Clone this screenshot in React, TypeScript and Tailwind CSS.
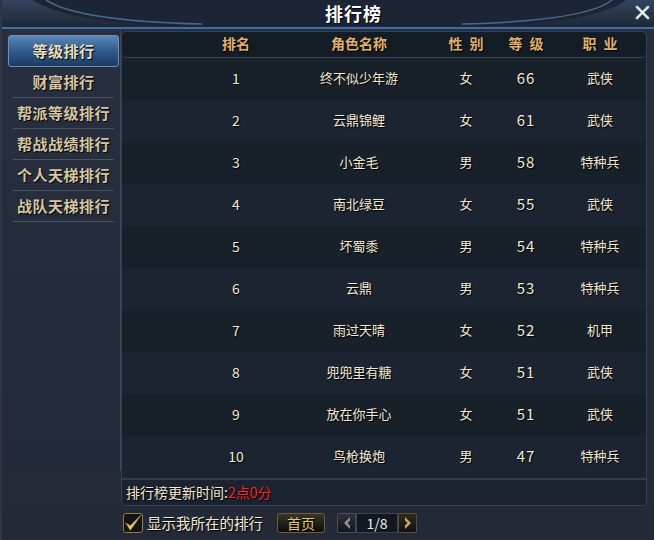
import React from "react";

const FONT = { fontFamily: '"Noto Sans CJK SC", "Noto Sans", sans-serif' };

const menu = ["等级排行", "财富排行", "帮派等级排行", "帮战战绩排行", "个人天梯排行", "战队天梯排行"];

const rows = [
  ["1", "终不似少年游", "女", "66", "武侠"],
  ["2", "云鼎锦鲤", "女", "61", "武侠"],
  ["3", "小金毛", "男", "58", "特种兵"],
  ["4", "南北绿豆", "女", "55", "武侠"],
  ["5", "坏蜀黍", "男", "54", "特种兵"],
  ["6", "云鼎", "男", "53", "特种兵"],
  ["7", "雨过天晴", "女", "52", "机甲"],
  ["8", "兜兜里有糖", "女", "51", "武侠"],
  ["9", "放在你手心", "女", "51", "武侠"],
  ["10", "鸟枪换炮", "男", "47", "特种兵"],
];

const cols = "grid grid-cols-[100px_146px_68px_52px_96px] pl-[64px]";

function TitleBar() {
  return (
    <div className="relative h-[29px] bg-gradient-to-b from-[#33445e] to-[#1e2737] border-b-2 border-[#3d6ea8]">
      {/* 标题栏弧线装饰 */}
      <svg className="absolute inset-0" width="654" height="29" viewBox="0 0 654 29">
        <path d="M30 0 Q70 25 200 27 L460 27 Q590 25 624 0 Z" fill="#1c2535" />
        <path d="M44 0 Q76 21 200 24" stroke="#5877a0" strokeWidth="1.5" fill="none" opacity="0.8" />
        <path d="M610 0 Q584 21 460 24" stroke="#5877a0" strokeWidth="1.5" fill="none" opacity="0.8" />
      </svg>
      <div className="absolute left-[323px] top-[4px] leading-none text-[18px] font-bold text-white tracking-[1px] [text-shadow:1px_1px_1px_#000]">
        排行榜
      </div>
      <svg className="absolute right-[4px] top-[5px]" width="15" height="15" viewBox="0 0 15 15">
        <path d="M2 2 L13 13 M13 2 L2 13" stroke="#9fb2c8" strokeWidth="3" strokeLinecap="round" />
        <path d="M2 2 L13 13 M13 2 L2 13" stroke="#ffffff" strokeWidth="1.3" strokeLinecap="round" />
      </svg>
    </div>
  );
}

function Sidebar() {
  return (
    <div className="w-[114px] h-[441px] bg-gradient-to-b from-[#283040] to-[#222a39] border-r border-[#3a4559] pt-[6px] px-[1px]">
      {menu.map((m, i) =>
        i === 0 ? (
          <div
            key={m}
            className="h-[32px] rounded-[3px] border border-[#6f8fb4] bg-gradient-to-b from-[#5b86b8] via-[#2f5b8d] to-[#1c3b64] flex items-center justify-center text-[15px] font-bold text-[#e6dcc2] tracking-[0.5px] [text-shadow:1px_1px_1px_#000]"
          >
            {m}
          </div>
        ) : (
          <div
            key={m}
            className="h-[31px] border-b border-[#4a5262] flex items-center justify-center text-[15px] font-bold text-[#d6c5a2] tracking-[0.5px] [text-shadow:1px_1px_1px_#000] mx-[5px]"
          >
            {m}
          </div>
        )
      )}
    </div>
  );
}

function Spaced({ a, b }: { a: string; b: string }) {
  return (
    <div className="flex justify-center gap-[7px]">
      <span>{a}</span>
      <span>{b}</span>
    </div>
  );
}

function Panel() {
  return (
    <div className="w-[526px] h-[475px] mt-[2px] rounded-[5px] border border-[#354155] bg-[#1a222e] overflow-hidden flex flex-col">
      <div className={`${cols} h-[26px] pb-[3px] items-center rounded-[5px] border-b border-[#3a4658] bg-[#141c25] text-[14px] font-bold text-[#e0b06c] [text-shadow:1px_1px_1px_#000] text-center leading-none`}>
        <div>排名</div>
        <div>角色名称</div>
        <Spaced a="性" b="别" />
        <Spaced a="等" b="级" />
        <Spaced a="职" b="业" />
      </div>
      {rows.map((r, i) => (
        <div
          key={r[0]}
          className={`${cols} h-[42px] pb-[3px] items-center text-center leading-none text-[#f2e8d4] [text-shadow:1px_1px_1px_#000] ${i % 2 === 0 ? "bg-[#18202a]" : "bg-[#1c2431]"}`}
        >
          <div className="text-[14px]">{r[0]}</div>
          <div className="text-[13px]">{r[1]}</div>
          <div className="text-[13px]">{r[2]}</div>
          <div className="text-[15px] tracking-[1px]">{r[3]}</div>
          <div className="text-[13px]">{r[4]}</div>
        </div>
      ))}
      <div className="h-[2px] bg-[#323c4b]" />
      <div className="flex-1 bg-[#1b2330] pl-[4px] flex items-center text-[14px] text-[#f2e8d4] [text-shadow:1px_1px_1px_#000]">
        排行榜更新时间:<span className="text-[#ff2424]">2点0分</span>
      </div>
    </div>
  );
}

function Footer() {
  return (
    <div className="flex items-center h-[20px] mt-[7px] ml-[121px]">
      <div className="w-[20px] h-[20px] rounded-[3px] border border-[#8a7a55] bg-[#141414] flex items-center justify-center">
        <svg width="20" height="20" viewBox="0 0 20 20">
          <path d="M2 10 L7 18 L19 1 L7 13 Z" fill="#e8cf7a" stroke="#a88a3e" strokeWidth="1" strokeLinejoin="round" />
        </svg>
      </div>
      <div className="ml-[4px] text-[14.5px] text-[#f2e8d4] [text-shadow:1px_1px_1px_#000]">显示我所在的排行</div>
      <div className="ml-[14px] w-[48px] h-[20px] rounded-[3px] border border-[#6b5c3a] bg-gradient-to-b from-[#3a3426] to-[#0e0d0a] flex items-center justify-center text-[14px] text-[#e6c87a] [text-shadow:1px_1px_1px_#000]">
        首页
      </div>
      <div className="ml-[12px] w-[19px] h-[20px] rounded-[2px] border border-[#4a4e56] bg-gradient-to-b from-[#2e3138] to-[#15171b] flex items-center justify-center">
        <svg width="10" height="14" viewBox="0 0 10 14">
          <path d="M8 1 L2 7 L8 13 L8 9.5 L5.5 7 L8 4.5 Z" fill="#8e929a" />
        </svg>
      </div>
      <div className="w-[42px] h-[20px] border border-[#3c4350] bg-[#121820] flex items-center justify-center text-[14px] text-[#e8e8e8]">
        1/8
      </div>
      <div className="w-[19px] h-[20px] rounded-[2px] border border-[#5a4e34] bg-gradient-to-b from-[#2e2a20] to-[#121010] flex items-center justify-center">
        <svg width="10" height="14" viewBox="0 0 10 14">
          <path d="M2 1 L8 7 L2 13 L2 9.5 L4.5 7 L2 4.5 Z" fill="#c8a866" />
        </svg>
      </div>
    </div>
  );
}

export default function App() {
  return (
    <div style={FONT} className="w-[654px] h-[540px] overflow-hidden bg-gradient-to-b from-[#262d3c] via-[#252c3a] to-[#232937] border-l-2 border-[#2e3646]">
      <TitleBar />
      <div className="flex ml-[5px]">
        <Sidebar />
        <Panel />
      </div>
      <Footer />
    </div>
  );
}
